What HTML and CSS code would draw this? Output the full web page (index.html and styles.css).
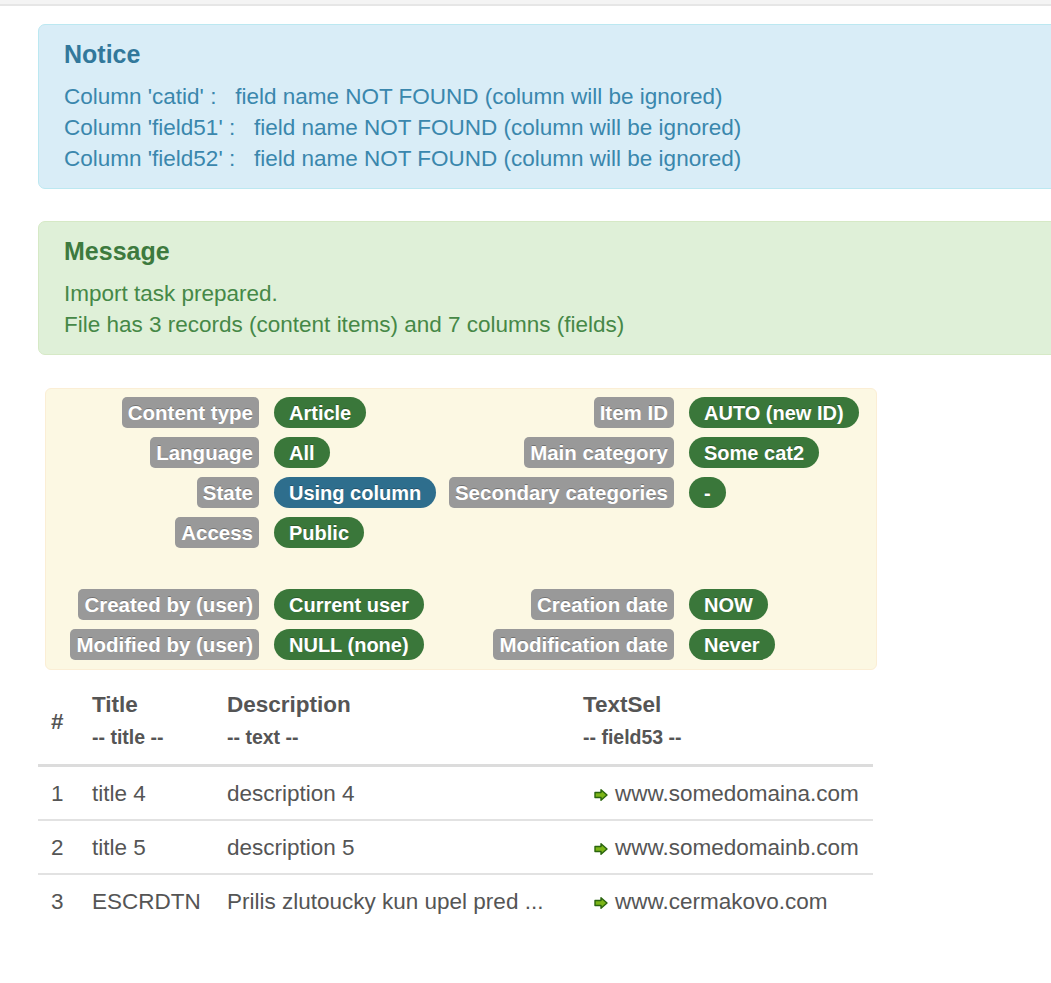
FILE: index.html
```html
<!DOCTYPE html>
<html lang="en">
<head>
  <meta charset="UTF-8" />
  <title>Import task</title>
  <link rel="stylesheet" href="styles.css">
</head>
<body>
  <div class="topbar"></div>

  <div class="page">
    <div class="alert alert-info">
      <h4>Notice</h4>
      <p>Column 'catid' : &nbsp; field name NOT FOUND (column will be ignored)</p>
      <p>Column 'field51' : &nbsp; field name NOT FOUND (column will be ignored)</p>
      <p>Column 'field52' : &nbsp; field name NOT FOUND (column will be ignored)</p>
    </div>

    <div class="alert alert-success">
      <h4>Message</h4>
      <p>Import task prepared.</p>
      <p>File has 3 records (content items) and 7 columns (fields)</p>
    </div>

    <div class="settings">
      <span class="label">Content type</span><span class="badge">Article</span>
      <span class="label">Item ID</span><span class="badge">AUTO (new ID)</span>

      <span class="label">Language</span><span class="badge">All</span>
      <span class="label">Main category</span><span class="badge">Some cat2</span>

      <span class="label">State</span><span class="badge badge-info">Using column</span>
      <span class="label">Secondary categories</span><span class="badge">-</span>

      <span class="label">Access</span><span class="badge">Public</span>
      <span></span><span></span>

      <div class="spacer"></div>

      <span class="label">Created by (user)</span><span class="badge">Current user</span>
      <span class="label">Creation date</span><span class="badge">NOW</span>

      <span class="label">Modified by (user)</span><span class="badge">NULL (none)</span>
      <span class="label">Modification date</span><span class="badge">Never</span>
    </div>

    <table class="records">
      <colgroup>
        <col style="width:41px">
        <col style="width:135px">
        <col style="width:356px">
        <col>
      </colgroup>
      <thead>
        <tr>
          <th>#</th>
          <th>Title<small>-- title --</small></th>
          <th>Description<small>-- text --</small></th>
          <th>TextSel<small>-- field53 --</small></th>
        </tr>
      </thead>
      <tbody>
        <tr>
          <td>1</td>
          <td>title 4</td>
          <td>description 4</td>
          <td><svg class="arrow" width="14" height="12" viewBox="0 0 14 12"><path d="M1 3.5h6V0.8l6 5.2-6 5.2V8.5H1z" fill="#7cb518" stroke="#2a650e" stroke-width="1.4" stroke-linejoin="round"/></svg>www.somedomaina.com</td>
        </tr>
        <tr>
          <td>2</td>
          <td>title 5</td>
          <td>description 5</td>
          <td><svg class="arrow" width="14" height="12" viewBox="0 0 14 12"><path d="M1 3.5h6V0.8l6 5.2-6 5.2V8.5H1z" fill="#7cb518" stroke="#2a650e" stroke-width="1.4" stroke-linejoin="round"/></svg>www.somedomainb.com</td>
        </tr>
        <tr>
          <td>3</td>
          <td>ESCRDTN</td>
          <td>Prilis zlutoucky kun upel pred ...</td>
          <td><svg class="arrow" width="14" height="12" viewBox="0 0 14 12"><path d="M1 3.5h6V0.8l6 5.2-6 5.2V8.5H1z" fill="#7cb518" stroke="#2a650e" stroke-width="1.4" stroke-linejoin="round"/></svg>www.cermakovo.com</td>
        </tr>
      </tbody>
    </table>
  </div>
</body>
</html>
```

FILE: styles.css
```css
html, body {
  overflow: hidden;
}
body {
  margin: 0;
  background: #fff;
  font-family: "Liberation Sans", Arial, sans-serif;
  font-size: 22.5px;
  line-height: 31px;
  color: #555;
}
.topbar {
  height: 4px;
  background: #f4f4f4;
  border-bottom: 2px solid #e6e6e6;
}
.page {
  padding: 18px 0 0 38px;
}
.alert {
  width: 1040px;
  padding: 12px 24px 14px 25px;
  border: 1px solid;
  border-radius: 7px;
  margin-bottom: 32px;
}
.alert h4 {
  margin: 0 0 10px;
  font-size: 25px;
  line-height: 34px;
  font-weight: bold;
}
.alert p {
  margin: 0;
}
.alert-info {
  background: #d9edf7;
  border-color: #bce8f1;
  color: #3a87ad;
}
.alert-info h4 {
  color: #32789b;
}
.alert-success {
  background: #dff0d8;
  border-color: #d6e9c6;
  color: #468847;
}
.alert-success h4 {
  color: #3d7a3e;
}
.settings {
  display: grid;
  grid-template-columns: 213px 162px 223px auto;
  column-gap: 15px;
  row-gap: 9px;
  align-items: center;
  width: 830px;
  margin: 33px 0 0 7px;
  padding: 8px 0 9px;
  background: #fcf8e3;
  border: 1px solid #fbeed5;
  border-radius: 6px;
}
.spacer {
  grid-column: 1 / -1;
  height: 23px;
}
.label, .badge {
  font-weight: bold;
  line-height: 24px;
  color: #fff;
  text-shadow: 0 -1px 0 rgba(0, 0, 0, 0.25);
  white-space: nowrap;
}
.label {
  justify-self: end;
  padding: 3.5px 6px;
  font-size: 20.5px;
  background: #999;
  border-radius: 5px;
}
.badge {
  justify-self: start;
  padding: 3.5px 15px;
  font-size: 20px;
  background: #3a773a;
  border-radius: 16px;
}
.badge-info {
  background: #2e6e8d;
}
.records {
  width: 835px;
  margin-top: 7px;
  border-collapse: collapse;
  table-layout: fixed;
}
.records th, .records td {
  padding: 10.5px 0 10.5px 13px;
  text-align: left;
  white-space: nowrap;
  overflow: hidden;
}
.records th {
  padding: 11.5px 0 9.5px 13px;
  font-weight: bold;
  vertical-align: middle;
  border-bottom: 3px solid #dcdcdc;
}
.records th small {
  display: block;
  font-size: 19.5px;
  line-height: 35px;
}
.records td {
  border-bottom: 2px solid #e2e2e2;
}
.records tr:last-child td {
  border-bottom: none;
}
.arrow {
  margin: 0 7px 0 11px;
  vertical-align: 0;
}
```
